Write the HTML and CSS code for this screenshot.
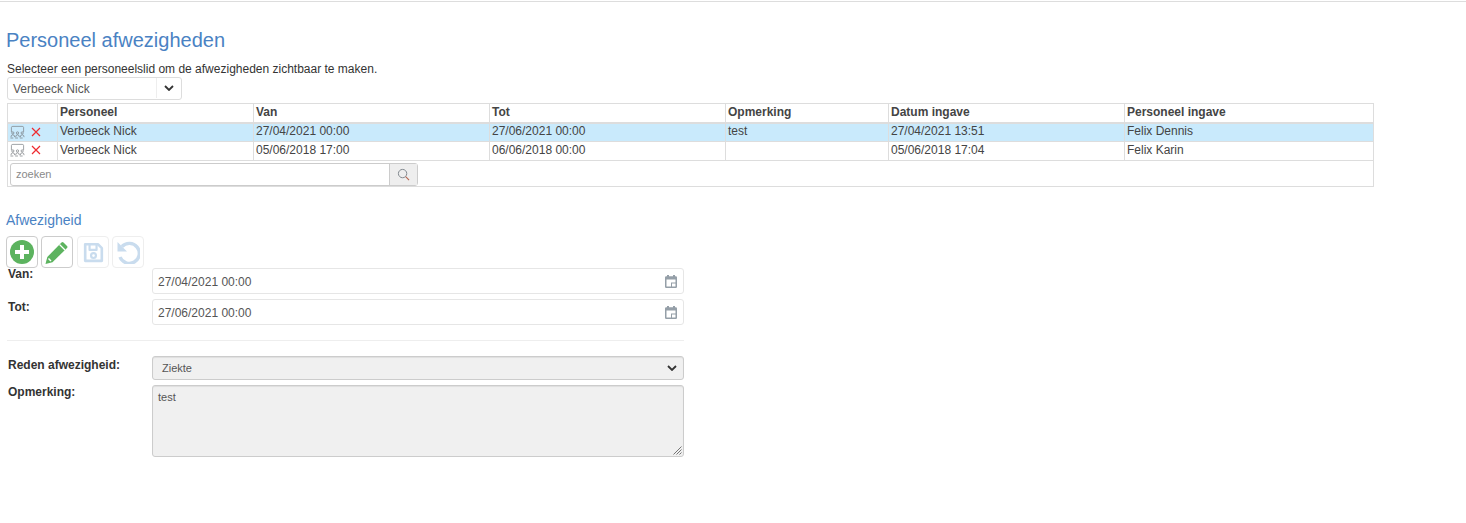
FILE: index.html
```html
<!DOCTYPE html>
<html lang="nl">
<head>
<meta charset="utf-8">
<title>Personeel afwezigheden</title>
<link rel="stylesheet" href="styles.css">
</head>
<body>
<div class="topline"></div>
<main class="page">
  <h1 class="title">Personeel afwezigheden</h1>
  <p class="intro">Selecteer een personeelslid om de afwezigheden zichtbaar te maken.</p>
  <div class="picker">
    <span class="picker-value">Verbeeck Nick</span>
    <span class="picker-arrow"><svg class="chev" viewBox="0 0 10 6"><path d="M1 1l4 4 4-4" fill="none" stroke="#333" stroke-width="1.800"/></svg></span>
  </div>
  <table class="grid">
    <colgroup>
      <col class="c0"><col class="c1"><col class="c2"><col class="c3"><col class="c4"><col class="c5"><col class="c6">
    </colgroup>
    <thead>
      <tr><th></th><th>Personeel</th><th>Van</th><th>Tot</th><th>Opmerking</th><th>Datum ingave</th><th>Personeel ingave</th></tr>
    </thead>
    <tbody>
      <tr class="selected">
        <td class="actions">
          <svg class="seat" viewBox="0 0 16 14"><path d="M1.500 7V2.200Q1.500 1 3 1h10q1.500 0 1.500 1.200V7" fill="none" stroke="#7f8489" stroke-width=".8"/><g fill="none" stroke="#6f7479" stroke-width=".7"><circle cx="3" cy="8" r="1.200"/><circle cx="8" cy="8" r="1.200"/><circle cx="13" cy="8" r="1.200"/><path d="M1 12.500q0-2.500 2-2.500t2 2.500M6 12.500q0-2.500 2-2.500t2 2.500M11 12.500q0-2.500 2-2.500t2 2.500"/><path d="M.5 13.400h15" stroke-dasharray="3 2"/></g></svg>
          <svg class="del" viewBox="0 0 10 10"><path d="M1 1l8 8M9 1l-8 8" stroke="#ee2a30" stroke-width="1.200" fill="none"/></svg>
        </td>
        <td>Verbeeck Nick</td><td>27/04/2021 00:00</td><td>27/06/2021 00:00</td><td>test</td><td>27/04/2021 13:51</td><td>Felix Dennis</td>
      </tr>
      <tr>
        <td class="actions">
          <svg class="seat" viewBox="0 0 16 14"><path d="M1.500 7V2.200Q1.500 1 3 1h10q1.500 0 1.500 1.200V7" fill="none" stroke="#7f8489" stroke-width=".8"/><g fill="none" stroke="#6f7479" stroke-width=".7"><circle cx="3" cy="8" r="1.200"/><circle cx="8" cy="8" r="1.200"/><circle cx="13" cy="8" r="1.200"/><path d="M1 12.500q0-2.500 2-2.500t2 2.500M6 12.500q0-2.500 2-2.500t2 2.500M11 12.500q0-2.500 2-2.500t2 2.500"/><path d="M.5 13.400h15" stroke-dasharray="3 2"/></g></svg>
          <svg class="del" viewBox="0 0 10 10"><path d="M1 1l8 8M9 1l-8 8" stroke="#ee2a30" stroke-width="1.200" fill="none"/></svg>
        </td>
        <td>Verbeeck Nick</td><td>05/06/2018 17:00</td><td>06/06/2018 00:00</td><td></td><td>05/06/2018 17:04</td><td>Felix Karin</td>
      </tr>
    </tbody>
    <tfoot>
      <tr><td colspan="7" class="foot">
        <div class="search">
          <span class="search-input">zoeken</span>
          <span class="search-btn"><svg class="mag" viewBox="0 0 14 14"><circle cx="6" cy="6" r="4.500" fill="none" stroke="#7a8288"/><path d="M9.300 9.300L13 13" stroke="#b5654f" stroke-width="1.200"/></svg></span>
        </div>
      </td></tr>
    </tfoot>
  </table>

  <h2 class="subtitle">Afwezigheid</h2>
  <div class="toolbar">
    <button class="tool" type="button"><svg viewBox="0 0 24 24"><circle cx="12" cy="12" r="12" fill="#5cb35f"/><path d="M12 5v14M5 12h14" stroke="#fff" stroke-width="4"/></svg></button>
    <button class="tool" type="button"><svg viewBox="0 0 24 24"><path d="M.5 24l1.800-7L16.500 2.500q1-1 2 0l3.500 3.500q1 1 0 2L7.500 22.200z" fill="#5cb35f"/><path d="M14.500 4.500l5.500 5.500" stroke="#fff" stroke-width="1.200"/><path d="M3.500 18.500l2.500 2.500" stroke="#fff" stroke-width="1.500"/></svg></button>
    <button class="tool off gap" type="button"><svg class="small" viewBox="0 0 24 24"><g fill="none" stroke="#c9dcee" stroke-linejoin="round"><path d="M2.500 2.500h14.500l4.500 4.500v14.500h-19z" stroke-width="3"/><path d="M7.500 3v6h8V3" stroke-width="2.500"/><circle cx="12" cy="15.500" r="2.800" stroke-width="2.500"/></g></svg></button>
    <button class="tool off" type="button"><svg viewBox="0 0 24 24"><path d="M6 6.500A10 10 0 1 1 4 17" fill="none" stroke="#c9dcee" stroke-width="3.400"/><path d="M1.500 2v9.500H11z" fill="#c9dcee"/></svg></button>
  </div>

  <div class="form">
    <div class="row row-date">
      <label class="lab">Van:</label>
      <div class="field date"><span>27/04/2021 00:00</span><svg class="cal" viewBox="0 0 12 13"><path fill-rule="evenodd" d="M2 0h2v1.200h4V0h2v1.200h.8q1.200 0 1.200 1.200v9.400q0 1.200-1.200 1.200H1.200Q0 13 0 11.800V2.400q0-1.200 1.200-1.200H2zM1.500 4.500v7H6V7.500h4.500v-3zM7 8.500v3h3.500v-3z" fill="#959fa8"/></svg></div>
    </div>
    <div class="row row-date">
      <label class="lab">Tot:</label>
      <div class="field date"><span>27/06/2021 00:00</span><svg class="cal" viewBox="0 0 12 13"><path fill-rule="evenodd" d="M2 0h2v1.200h4V0h2v1.200h.8q1.200 0 1.200 1.200v9.400q0 1.200-1.200 1.200H1.200Q0 13 0 11.800V2.400q0-1.200 1.200-1.200H2zM1.500 4.500v7H6V7.500h4.500v-3zM7 8.500v3h3.500v-3z" fill="#959fa8"/></svg></div>
    </div>
    <hr class="sep">
    <div class="row row-select">
      <label class="lab">Reden afwezigheid:</label>
      <div class="field disabled select"><span>Ziekte</span><svg class="chev" viewBox="0 0 10 6"><path d="M1 1l4 4 4-4" fill="none" stroke="#333" stroke-width="1.800"/></svg></div>
    </div>
    <div class="row row-note">
      <label class="lab">Opmerking:</label>
      <div class="field disabled area"><span>test</span><svg class="grip" viewBox="0 0 9 9"><path d="M8.500 .5l-8 8M8.500 3.500l-5 5M8.500 6.500l-2 2" stroke="#555" stroke-width=".8"/></svg></div>
    </div>
  </div>
</main>
</body>
</html>
```

FILE: styles.css
```css
* { box-sizing: border-box; }
html, body { margin: 0; background: #fff; }
body {
  font-family: "Liberation Sans", Arial, sans-serif;
  font-size: 12px;
  color: #333;
}
.topline { height: 1px; margin-top: 1px; background: #ddd; }
.page { padding: 0 0 0 7px; }
.title {
  margin: 26px 0 0 -1px;
  font-size: 20px;
  line-height: 24px;
  font-weight: 400;
  color: #4a82c3;
}
.intro { margin: 10px 0 0 0; line-height: 14px; font-size: 12px; }
.picker {
  display: flex;
  width: 175px;
  height: 23px;
  margin-top: 1px;
  border: 1px solid #ddd;
  border-radius: 3px;
}
.picker-value { flex: 1; padding-left: 5px; line-height: 22px; color: #555; }
.picker-arrow {
  width: 25px;
  display: flex;
  align-items: center;
  justify-content: center;
  border-left: 1px solid #eee;
  margin: 0 0 1px;
}
.chev { width: 10px; height: 6px; display: block; }
.grid {
  width: 1366px;
  margin-top: 3px;
  border-collapse: collapse;
  table-layout: fixed;
  border: 1px solid #ddd;
}
.c0 { width: 50px; }
.c1 { width: 196px; }
.c2 { width: 236px; }
.c3 { width: 236px; }
.c4 { width: 163px; }
.c5 { width: 236px; }
.c6 { width: 249px; }
.grid th, .grid td {
  border: 1px solid #ddd;
  padding: 0 2px 2px;
  text-align: left;
  height: 19px;
  line-height: 15px;
  font-size: 12px;
  color: #444;
  white-space: nowrap;
}
.grid th { font-weight: 700; height: 19px; padding-bottom: 1px; border-bottom-width: 2px; }
.selected td { background: #c9eafc; }
.actions { white-space: nowrap; }
.grid td.actions { padding: 0 0 2px 2px; }
.seat { width: 15px; height: 14px; vertical-align: middle; }
.del { width: 10px; height: 10px; margin-left: 3px; vertical-align: middle; }
.grid td.foot { height: 26px; padding: 2px 2px 0; }
.search { display: flex; width: 408px; height: 23px; border: 1px solid #ccc; border-radius: 3px; }
.search-input { flex: 1; padding-left: 5px; line-height: 20px; color: #8a8a8a; font-size: 11px; }
.search-btn {
  width: 28px;
  background: #eee;
  border-left: 1px solid #ccc;
  display: flex;
  align-items: center;
  justify-content: center;
}
.mag { width: 13px; height: 13px; }
.subtitle {
  margin: 25px 0 0 -1px;
  font-size: 14px;
  line-height: 16px;
  font-weight: 400;
  color: #4a82c3;
}
.toolbar { display: flex; gap: 3px; margin: 8px 0 0 -1px; }
.tool {
  width: 32px;
  height: 32px;
  padding: 3px;
  background: #fff;
  border: 1px solid #ccc;
  border-radius: 4px;
  display: flex;
  align-items: center;
  justify-content: center;
}
.tool svg { width: 24px; height: 24px; display: block; }
.tool svg.small { width: 21px; height: 21px; }
.tool.off { border-color: #eee; }
.tool.gap { margin-left: 1px; }
.form { width: 677px; }
.row { display: flex; align-items: flex-start; }
.row-date { margin-bottom: 5px; }
.row-select { margin-bottom: 5px; }
.row-select .lab { margin-top: 1px; }
.lab {
  width: 145px;
  padding-left: 1px;
  padding-top: 1px;
  font-weight: 700;
  line-height: 14px;
  color: #333;
  flex: none;
}
.row-date .lab { margin-top: -2px; }
.row-date + .row-date .lab { margin-top: 0; }
.row-note .lab { padding-top: 0; }
.field {
  width: 532px;
  border: 1px solid #e6e6e6;
  border-radius: 3px;
  display: flex;
  align-items: center;
  justify-content: space-between;
  color: #555;
  position: relative;
}
.date { height: 26px; padding: 1px 6px 0 5px; }
.cal { width: 12px; height: 13px; display: block; }
.sep { border: 0; border-top: 1px solid #eee; margin: 15px 0 15px; }
.disabled { background: #f0f0f0; border-color: #ccc; box-shadow: inset 0 1px 1px rgba(0,0,0,.075); font-size: 11px; }
.select { height: 24px; padding: 0 6px 0 9px; }
.area { height: 72px; align-items: flex-start; padding: 5px; }
.grip { position: absolute; right: 1px; bottom: 1px; width: 9px; height: 9px; }
```
